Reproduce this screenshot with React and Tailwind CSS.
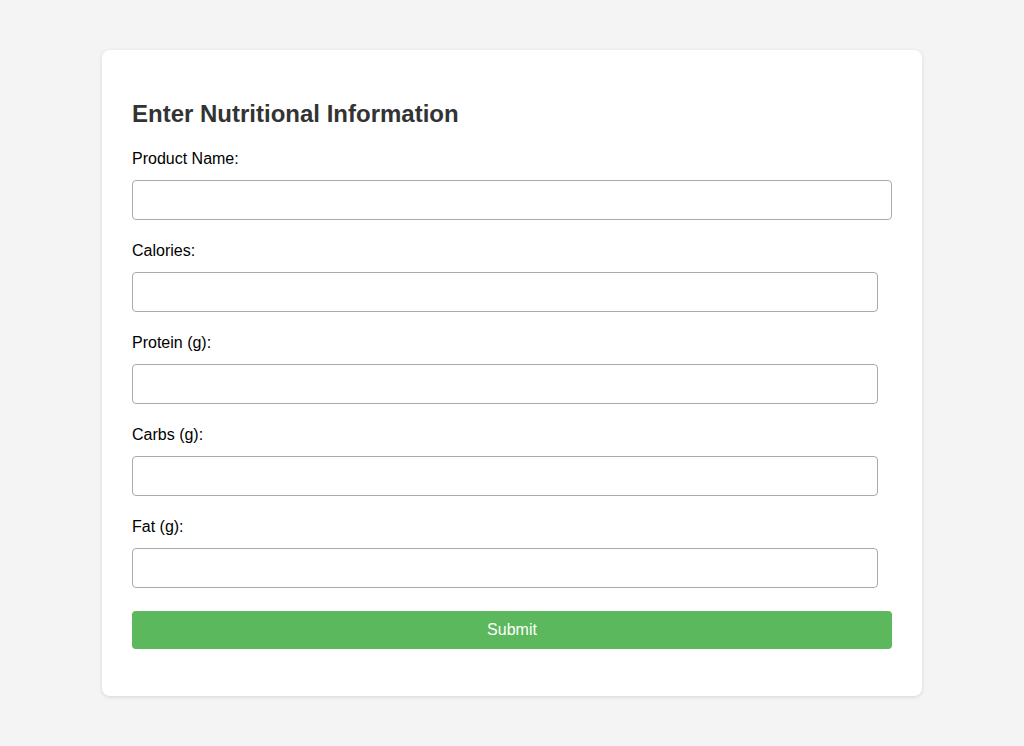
import React, { useState } from "react";

const FIELDS = [
  { id: "name", label: "Product Name:", wide: true },
  { id: "calories", label: "Calories:" },
  { id: "protein", label: "Protein (g):" },
  { id: "carbs", label: "Carbs (g):" },
  { id: "fat", label: "Fat (g):" },
];

export default function App() {
  const [values, setValues] = useState({});

  return (
    <div
      className="min-h-[746px] bg-[#f4f4f4] pt-[50px] pb-[50px]"
      style={{ fontFamily: '"Liberation Sans", Arial, sans-serif' }}
    >
      <div className="mx-auto w-[820px] rounded-lg bg-white px-[30px] pt-[50px] pb-[47px] shadow-[0_1px_4px_rgba(0,0,0,0.12)]">
        <h2 className="mb-[20px] text-[24px] leading-[28px] font-bold text-[#333]">
          Enter Nutritional Information
        </h2>

        <form onSubmit={(e) => e.preventDefault()}>
          {FIELDS.map((field) => (
            <div key={field.id} className="mb-[20px]">
              <label
                htmlFor={field.id}
                className="mb-[10px] block text-[16px] leading-[22px] text-black"
              >
                {field.label}
              </label>
              <input
                id={field.id}
                type="text"
                value={values[field.id] || ""}
                onChange={(e) =>
                  setValues({ ...values, [field.id]: e.target.value })
                }
                className={
                  field.wide
                    ? "block h-[40px] w-full rounded border border-[#aaa] px-2 text-[16px] outline-none"
                    : "block h-[40px] w-[746px] rounded border border-[#aaa] px-2 text-[16px] outline-none"
                }
              />
            </div>
          ))}

          <button
            type="submit"
            className="mt-[23px] block h-[38px] w-full rounded bg-[#5cb85c] text-[16px] text-white"
          >
            Submit
          </button>
        </form>
      </div>
    </div>
  );
}
